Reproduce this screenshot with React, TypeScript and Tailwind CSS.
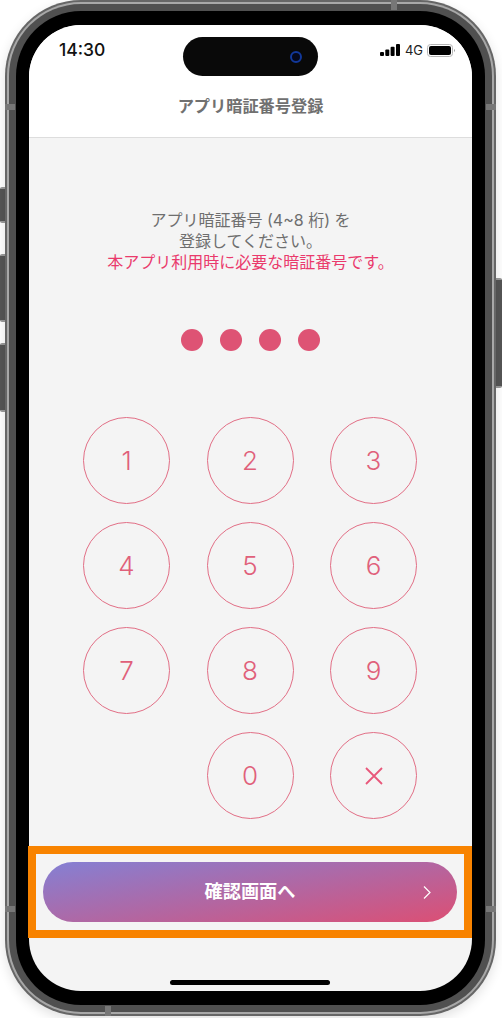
const jp = "font-['Inter','Noto_Sans_CJK_JP',sans-serif]";

function Key({ label }: { label: string }) {
  return (
    <button className="flex h-[87px] w-[87px] items-center justify-center rounded-full border border-[#e26f86] text-[26px] font-light leading-none text-[#e0607a]">
      {label}
    </button>
  );
}

function Tick({ className }: { className: string }) {
  return <div className={`absolute bg-[#777777] ${className}`} />;
}

function SideButton({ className }: { className: string }) {
  return <div className={`absolute border-y-2 border-[#999999] bg-[#555555] ${className}`} />;
}

export default function App() {
  return (
    <div className={`relative h-[1018px] w-[502px] overflow-hidden bg-white ${jp}`}>
      <SideButton className="left-0 top-[187px] h-[36px] w-[6px] rounded-l-[2px]" />
      <SideButton className="left-0 top-[254px] h-[68px] w-[6px] rounded-l-[2px]" />
      <SideButton className="left-0 top-[343px] h-[69px] w-[6px] rounded-l-[2px]" />
      <SideButton className="right-0 top-[278px] h-[110px] w-[7px] rounded-r-[2px]" />

      <div className="relative ml-[5px] h-[1016px] w-[491px] rounded-[76px] bg-[#666666] p-[2px] shadow-[0_4px_12px_rgba(0,0,0,0.12)]">
        <div className="h-full w-full rounded-[74px] bg-[#a8a8a8] p-[2px]">
          <div className="h-full w-full rounded-[72px] bg-[#505050] p-[7px]">
            <div className="h-full w-full rounded-[65px] bg-black px-[13px] py-[14px]">
              <div className="relative flex h-full w-full flex-col rounded-[52px] bg-[#f4f4f4]">
                <header className="relative h-[113px] shrink-0 rounded-t-[52px] border-b border-[#dddddd] bg-white">
                  <div className="flex items-center justify-between pl-[30px] pr-[16px] pt-[15px]">
                    <span className="text-[17.500px] font-medium leading-[20px] text-[#111111]">14:30</span>
                    <div className="flex items-center gap-[5px]">
                      <svg width="20" height="12" viewBox="0 0 20 12">
                        <rect x="0" y="8" width="4" height="4" rx="1" fill="#000" />
                        <rect x="5.300" y="5.500" width="4" height="6.500" rx="1" fill="#000" />
                        <rect x="10.600" y="2.800" width="4" height="9.200" rx="1" fill="#000" />
                        <rect x="16" y="0" width="4" height="12" rx="1" fill="#000" />
                      </svg>
                      <span className="text-[13px] leading-[12px] text-[#222222]">4G</span>
                      <svg width="29" height="13" viewBox="0 0 29 13" className="ml-[-1px]">
                        <rect x="0.5" y="0.5" width="25" height="12" rx="3" fill="none" stroke="#b5b5b5" />
                        <rect x="2" y="2" width="22" height="9" rx="2" fill="#000" />
                        <path d="M27 5v3c.7-.3 1-.9 1-1.500s-.3-1.200-1-1.500z" fill="#999" />
                      </svg>
                    </div>
                  </div>
                  <h1 className="mt-[35px] text-center text-[16.200px] font-bold leading-[22px] text-[#707070]">
                    アプリ暗証番号登録
                  </h1>
                </header>

                <main className="flex flex-1 flex-col items-center">
                  <div className="mt-[72px] whitespace-nowrap text-center text-[16px] leading-[21px] text-[#6e6e6e]">
                    <p>アプリ暗証番号 (4~8 桁) を</p>
                    <p>登録してください。</p>
                    <p className="text-[#ea3a6c]">本アプリ利用時に必要な暗証番号です。</p>
                  </div>
                  <div className="mt-[56px] flex gap-[17px]">
                    {[0, 1, 2, 3].map((i) => (
                      <div key={i} className="h-[22px] w-[22px] rounded-full bg-[#de5374]" />
                    ))}
                  </div>
                  <div className="-ml-[1px] mt-[66px] grid grid-cols-[87px_87px_87px] gap-x-[36.500px] gap-y-[18px]">
                    {["1", "2", "3", "4", "5", "6", "7", "8", "9"].map((n) => (
                      <Key key={n} label={n} />
                    ))}
                    <div />
                    <Key label="0" />
                    <button className="flex h-[87px] w-[87px] items-center justify-center rounded-full border border-[#e26f86]">
                      <svg width="18" height="18" viewBox="0 0 18 18">
                        <path d="M1 1l16 16M17 1L1 17" stroke="#e8577a" strokeWidth="1.800" fill="none" />
                      </svg>
                    </button>
                  </div>
                </main>

                <div className="-ml-px mb-[53px] h-[92px] w-[444px] shrink-0 border-[8px] border-[#f88300] px-[7px] py-[8px]">
                  <button className="relative flex h-[60px] w-full items-center justify-center rounded-full bg-[linear-gradient(170deg,#8480d4_0%,#dc4f74_100%)] text-[18.200px] font-bold text-white">
                    確認画面へ
                    <svg width="8" height="13" viewBox="0 0 8 13" className="absolute right-[26px] top-[24px]">
                      <path d="M1 .5l6 6-6 6" stroke="#ffffff" strokeWidth="1.200" fill="none" />
                    </svg>
                  </button>
                </div>

                <div className="absolute bottom-[6px] left-[141px] h-[5px] w-[160px] rounded-full bg-black" />
              </div>
            </div>
          </div>
        </div>

        <div className="absolute left-[178px] top-[37px] flex h-[39px] w-[135px] items-center justify-end rounded-full bg-[#090909] pr-[16px]">
          <div className="h-[12px] w-[12px] rounded-full border-2 border-[#12389a] bg-[#05081a]" />
        </div>
        <Tick className="left-0 top-[104px] h-[6px] w-[10px]" />
        <Tick className="right-0 top-[104px] h-[6px] w-[10px]" />
        <Tick className="left-0 top-[906px] h-[6px] w-[10px]" />
        <Tick className="right-0 top-[906px] h-[6px] w-[10px]" />
        <Tick className="left-[386px] top-0 h-[10px] w-[6px]" />
        <Tick className="left-[100px] bottom-0 h-[10px] w-[6px]" />
      </div>
    </div>
  );
}
